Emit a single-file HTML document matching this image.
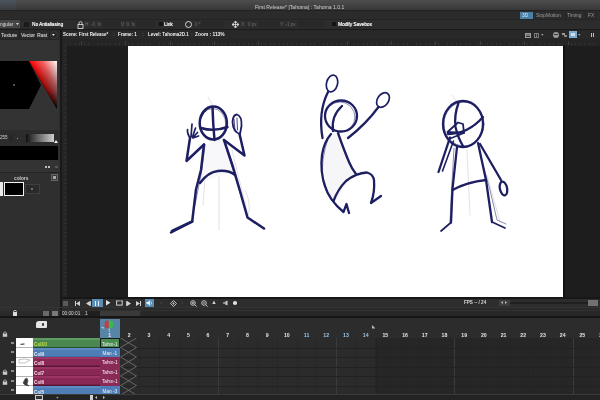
<!DOCTYPE html>
<html><head><meta charset="utf-8">
<style>
*{margin:0;padding:0;box-sizing:border-box}
html,body{width:600px;height:400px;overflow:hidden;background:#2a2a2a;font-family:"Liberation Sans",sans-serif;color:#ddd}
.a{position:absolute}
.t{position:absolute;white-space:nowrap;line-height:6px;will-change:transform}
.fn{position:absolute;top:332px;width:19.7px;text-align:center;font-size:5.2px;line-height:6px;font-weight:bold}
.cell{position:absolute;left:99.7px;width:19.7px;height:9.5px;font-size:4.7px;line-height:11px;text-align:center;color:#f4f4f4;will-change:transform}
</style></head><body>
<div class="a" style="left:0px;top:0px;width:600px;height:10px;background:linear-gradient(#4e4e4e,#373737);"></div>
<div class="a" style="left:0px;top:0px;width:16px;height:9.5px;background:linear-gradient(rgba(70,95,120,.35),rgba(70,95,120,.1));"></div>
<div class="t" style="left:255px;top:3.6px;color:#d0d0d0;font-size:5.1px;font-weight:normal;">First Release* [Tahoma] : Tahoma 1.0.1</div>
<div class="a" style="left:0px;top:10px;width:600px;height:1px;background:#222;"></div>
<div class="a" style="left:0px;top:11px;width:600px;height:8px;background:#2b2b2b;"></div>
<div class="a" style="left:519.5px;top:11.5px;width:13px;height:7.5px;background:#4a80a8;"></div>
<div class="t" style="left:522px;top:12.5px;color:#dce8f0;font-size:4.8px;font-weight:normal;">3D</div>
<div class="t" style="left:536px;top:12.5px;color:#9c9c9c;font-size:4.9px;font-weight:normal;">StopMotion</div>
<div class="t" style="left:567px;top:12.5px;color:#9c9c9c;font-size:4.9px;font-weight:normal;">Timing</div>
<div class="a" style="left:564.5px;top:11.5px;width:0.8px;height:7.5px;background:#232323;"></div>
<div class="a" style="left:585px;top:11.5px;width:0.8px;height:7.5px;background:#232323;"></div>
<div class="t" style="left:588px;top:12.5px;color:#9c9c9c;font-size:4.9px;font-weight:normal;">FX</div>
<div class="a" style="left:0px;top:19px;width:600px;height:10px;background:#2c2c2c;"></div>
<div class="a" style="left:0px;top:19px;width:600px;height:0.8px;background:#242424;"></div>
<div class="a" style="left:0px;top:20px;width:19.5px;height:8px;background:#454545;"></div>
<div class="t" style="left:0px;top:22px;color:#ddd;font-size:4.8px;font-weight:normal;">ngular</div>
<svg class="a" style="left:15.6px;top:23.3px" width="3" height="2.2" viewBox="0 0 3 2.2"><polygon points="0,0 3,0 1.5,2.2" fill="#d0d0d0"/></svg>
<div class="a" style="left:24px;top:22px;width:5px;height:5px;background:#1b1b1b;"></div>
<div class="t" style="left:32px;top:22px;color:#f4f4f4;font-size:4.7px;font-weight:normal;text-shadow:0.3px 0 0 #f4f4f4">No Antialiasing</div>
<svg class="a" style="left:77px;top:20.5px" width="7" height="8" viewBox="0 0 7 8"><path d="M2 3.5 V2.2 Q2 0.6 3.5 0.6 Q5 0.6 5 2.2 V3.5" stroke="#d8d8d8" stroke-width="0.9" fill="none"/><rect x="1" y="3.5" width="5" height="4" fill="none" stroke="#d8d8d8" stroke-width="0.9"/></svg>
<div class="t" style="left:85px;top:22px;color:#6f6f6f;font-size:4.6px;font-weight:normal;">H: -0 &nbsp;fx</div>
<div class="a" style="left:103px;top:21px;width:17px;height:6px;background:#282828;"></div>
<div class="t" style="left:121px;top:22px;color:#6f6f6f;font-size:4.6px;font-weight:normal;">V: 0 &nbsp;fx</div>
<div class="a" style="left:136px;top:21px;width:19px;height:6px;background:#282828;"></div>
<div class="a" style="left:159px;top:22px;width:4px;height:4px;background:#141414;"></div>
<div class="t" style="left:164px;top:22px;color:#f4f4f4;font-size:4.7px;font-weight:normal;text-shadow:0.3px 0 0 #f4f4f4">Link</div>
<div class="a" style="left:184.5px;top:20.5px;width:7px;height:7px;border:1.2px solid #d6d6d6;border-radius:50%"></div>
<div class="t" style="left:195px;top:22px;color:#6f6f6f;font-size:4.6px;font-weight:normal;">0 °</div>
<div class="a" style="left:201px;top:21px;width:24px;height:6px;background:#282828;"></div>
<svg class="a" style="left:231.5px;top:20.5px" width="7" height="7" viewBox="0 0 7 7"><path d="M3.5 0 L2.3 1.4 H4.7 Z M3.5 7 L2.3 5.6 H4.7 Z M0 3.5 L1.4 2.3 V4.7 Z M7 3.5 L5.6 2.3 V4.7 Z M3.5 1 V6 M1 3.5 H6" fill="#dcdcdc" stroke="#dcdcdc" stroke-width="0.8"/></svg>
<div class="t" style="left:241px;top:22px;color:#6f6f6f;font-size:4.6px;font-weight:normal;">X: &nbsp;0 px</div>
<div class="a" style="left:259px;top:21px;width:21px;height:6px;background:#282828;"></div>
<div class="t" style="left:280px;top:22px;color:#6f6f6f;font-size:4.6px;font-weight:normal;">Y: -1 px</div>
<div class="a" style="left:298px;top:21px;width:26px;height:6px;background:#282828;"></div>
<div class="a" style="left:332px;top:22px;width:4px;height:4px;background:#141414;"></div>
<div class="t" style="left:338px;top:22px;color:#f4f4f4;font-size:4.75px;font-weight:normal;text-shadow:0.3px 0 0 #f4f4f4">Modify Savebox</div>
<div class="a" style="left:0px;top:29px;width:600px;height:1px;background:#1a1a1a;"></div>
<div class="a" style="left:0px;top:30px;width:60px;height:280px;background:#2f2f2f;"></div>
<div class="a" style="left:0px;top:30px;width:60px;height:9px;background:#2a2a2a;"></div>
<div class="t" style="left:1px;top:32.8px;color:#b8b8b8;font-size:4.9px;font-weight:normal;text-shadow:0.3px 0 0 #b8b8b8">Texture</div>
<div class="a" style="left:18.5px;top:30.5px;width:0.8px;height:8px;background:#202020;"></div>
<div class="a" style="left:35px;top:30.5px;width:0.8px;height:8px;background:#202020;"></div>
<div class="a" style="left:48.5px;top:30.5px;width:0.8px;height:8px;background:#202020;"></div>
<div class="t" style="left:20.5px;top:32.8px;color:#b8b8b8;font-size:4.9px;font-weight:normal;text-shadow:0.3px 0 0 #b8b8b8">Vector</div>
<div class="t" style="left:37px;top:32.8px;color:#b8b8b8;font-size:4.9px;font-weight:normal;text-shadow:0.3px 0 0 #b8b8b8">Rast</div>
<div class="a" style="left:50px;top:31px;width:7.5px;height:7.5px;border-radius:50%;background:#262626;border:0.8px solid #3a3a3a"></div>
<svg class="a" style="left:52.3px;top:33.8px" width="2.8" height="2" viewBox="0 0 2.8 2"><polygon points="0,0 2.8,0 1.4,2" fill="#e6e6e6"/></svg>
<div class="a" style="left:0px;top:39px;width:59px;height:1px;background:#242424;"></div>
<div class="a" style="left:0px;top:40px;width:59px;height:90px;background:#333333;"></div>
<svg class="a" style="left:0;top:40px" width="60" height="90">
<defs>
<linearGradient id="gA" gradientUnits="userSpaceOnUse" x1="0" y1="21" x2="0" y2="69"><stop offset="0" stop-color="#ff0000"/><stop offset=".6" stop-color="#8a0000"/><stop offset="1" stop-color="#000"/></linearGradient>
<linearGradient id="gB" gradientUnits="userSpaceOnUse" x1="36.11" y1="33.19" x2="57" y2="21"><stop offset="0" stop-color="#000"/><stop offset=".45" stop-color="#5a5a5a"/><stop offset="1" stop-color="#fff"/></linearGradient>
</defs>
<polygon points="0,21 29,21 41,45 29,69 0,69" fill="#000"/>
<circle cx="14" cy="45" r="0.9" fill="#777"/>
<g style="isolation:isolate">
<polygon points="29,21 57,21 57,69" fill="url(#gA)"/>
<polygon points="29,21 57,21 57,69" fill="url(#gB)" style="mix-blend-mode:lighten"/>
</g>
</svg>
<div class="a" style="left:0px;top:130px;width:59px;height:16px;background:#2c2c2c;"></div>
<div class="t" style="left:0px;top:135.2px;color:#d0d0d0;font-size:4.6px;font-weight:normal;">255</div>
<div class="a" style="left:9px;top:134.5px;width:4px;height:7px;background:#262626;"></div>
<div class="a" style="left:16.5px;top:137.5px;width:1.3px;height:1.3px;background:#999;"></div>
<div class="a" style="left:26px;top:134px;width:28px;height:7.5px;background:linear-gradient(90deg,#0e0e0e,#3a3a3a 20%,#cfcfcf);"></div>
<div class="a" style="left:53.5px;top:139.5px;width:0;height:0;border-left:2.2px solid transparent;border-right:2.2px solid transparent;border-bottom:3.2px solid #eee"></div>
<div class="a" style="left:0px;top:146px;width:58px;height:13.5px;background:#000;"></div>
<div class="a" style="left:0px;top:159.5px;width:59px;height:12px;background:#333;"></div>
<div class="a" style="left:45px;top:166px;width:2.2px;height:1.6px;background:#bbb;"></div>
<div class="a" style="left:48px;top:166px;width:2.2px;height:1.6px;background:#bbb;"></div>
<div class="a" style="left:55px;top:165.5px;width:2.5px;height:2.5px;background:#555;"></div>
<div class="a" style="left:0px;top:171.5px;width:59px;height:1px;background:#242424;"></div>
<div class="a" style="left:0px;top:172.5px;width:59px;height:138px;background:#2f2f2f;"></div>
<div class="t" style="left:13.5px;top:175.6px;color:#cfcfcf;font-size:4.8px;font-weight:bold;">colors</div>
<div class="a" style="left:50.5px;top:174px;width:7px;height:7px;border:1px solid #666;background:#3a3a3a"></div>
<div class="a" style="left:52.5px;top:176px;width:3px;height:2.5px;background:#aaa;"></div>
<div class="a" style="left:0px;top:182px;width:3px;height:14px;background:#eaeaea;"></div>
<div class="a" style="left:4px;top:182px;width:19.5px;height:14px;border:1.6px solid #f2f2f2;background:#000"></div>
<div class="a" style="left:24.5px;top:184px;width:15.5px;height:10px;border:1px solid #3e3e3e;background:#2a2a2a"></div>
<div class="a" style="left:31.3px;top:188px;width:2px;height:2px;background:#6a6a6a;"></div>
<div class="a" style="left:59.5px;top:30px;width:2.5px;height:286px;background:#191919;"></div>
<div class="a" style="left:62px;top:30px;width:538px;height:268px;background:#1d1d1d;"></div>
<div class="a" style="left:62px;top:30px;width:538px;height:9px;background:#282828;"></div>
<div class="t" style="left:63px;top:32.3px;color:#f0f0f0;font-size:4.45px;font-weight:bold;">Scene: First Release*</div>
<div class="t" style="left:112.5px;top:32.3px;color:#777;font-size:4.5px;font-weight:normal;">::</div>
<div class="t" style="left:118px;top:32.3px;color:#f0f0f0;font-size:4.5px;font-weight:bold;">Frame: 1</div>
<div class="t" style="left:141.5px;top:32.3px;color:#777;font-size:4.5px;font-weight:normal;">::</div>
<div class="t" style="left:147.5px;top:32.3px;color:#f0f0f0;font-size:4.5px;font-weight:bold;">Level: Tahoma2D.1</div>
<div class="t" style="left:190.5px;top:32.3px;color:#777;font-size:4.5px;font-weight:normal;">::</div>
<div class="t" style="left:195px;top:32.3px;color:#f0f0f0;font-size:4.85px;font-weight:bold;">Zoom : 113%</div>
<div class="a" style="left:524.5px;top:32.5px;width:6.5px;height:5px;border:1px solid #9a9a9a;background:#3a3a3a"></div>
<div class="a" style="left:526px;top:34px;width:3.5px;height:2px;background:#777;"></div>
<div class="a" style="left:534px;top:32.5px;width:5px;height:5px;border:1px solid #7a7a7a"></div>
<div class="a" style="left:536px;top:33.5px;width:1px;height:3px;background:#777;"></div>
<svg class="a" style="left:541.3px;top:34.2px" width="2.6" height="1.8" viewBox="0 0 2.6 1.8"><polygon points="0,0 2.6,0 1.3,1.8" fill="#9a9a9a"/></svg>
<div class="a" style="left:553px;top:31.8px;width:6px;height:6px;border-radius:50%;background:#9a9a9a"></div>
<div class="a" style="left:554.3px;top:34.2px;width:3.4px;height:1.3px;background:#3a3a3a;"></div>
<div class="a" style="left:562px;top:33px;width:3px;height:2px;background:#999;"></div>
<div class="a" style="left:564px;top:35px;width:3px;height:2px;background:#888;"></div>
<div class="a" style="left:569px;top:31.2px;width:8px;height:7px;background:#7fa9cc;"></div>
<div class="a" style="left:571px;top:33px;width:4px;height:3px;background:#c8e0f4;"></div>
<svg class="a" style="left:578.3px;top:34.2px" width="2.6" height="1.8" viewBox="0 0 2.6 1.8"><polygon points="0,0 2.6,0 1.3,1.8" fill="#9a9a9a"/></svg>
<div class="a" style="left:590.5px;top:32.5px;width:1.3px;height:4.5px;background:#bdbdbd;"></div>
<div class="a" style="left:593.2px;top:32.5px;width:1.3px;height:4.5px;background:#bdbdbd;"></div>
<div class="a" style="left:62px;top:39px;width:538px;height:6.5px;background:#252525;"></div>
<div class="a" style="left:66px;top:42.5px;width:534px;height:2px;background-image:repeating-linear-gradient(90deg,#333 0 0.9px,transparent 0.9px 4.43px)"></div>
<div class="a" style="left:81.2px;top:40.5px;width:519px;height:4px;background-image:repeating-linear-gradient(90deg,#3e3e3e 0 0.9px,transparent 0.9px 44.3px)"></div>
<div class="a" style="left:62px;top:45px;width:4.5px;height:253px;background:#252525;"></div>
<div class="a" style="left:63.5px;top:46px;width:2px;height:252px;background-image:repeating-linear-gradient(180deg,#313131 0 0.9px,transparent 0.9px 4.43px)"></div>
<div class="a" style="left:127.5px;top:45.5px;width:435.5px;height:252px;background:#ffffff;"></div>
<div class="a" style="left:563px;top:45px;width:1.5px;height:253px;background:#121212;"></div>
<svg class="a" style="left:0;top:0" width="600" height="400" fill="none" stroke="#1d1f62" stroke-linecap="round" stroke-linejoin="round">
<g stroke="#cfcfd8" stroke-width="0.6">
<path d="M208 97 L213 106"/><path d="M219 140 L219 230"/><path d="M207 150 L203 205"/><path d="M232 150 L248 215"/>
<path d="M207 176 Q222 168 234 172"/><path d="M245 190 Q252 205 248 215"/>
<path d="M332 142 Q334 170 333 200" stroke="#c0c0cc"/><path d="M326 175 Q324 195 340 208"/>
<path d="M452 95 L458 103"/><path d="M467 150 L470 215"/><path d="M487 175 L500 222"/>
</g>
<polygon points="205,144 224,140 234,172 200,182" fill="#f8f8fa" stroke="none"/>
<path d="M331 134 Q324 142 322 155 Q320 172 325 186 Q329 200 335 203 Q345 181 356 174 Q352 169 349 162 Q344 150 338 133 Z" fill="#f6f6f8" stroke="none"/>
<g stroke-width="1" stroke="#5a5c90" opacity=".7">
<ellipse cx="212.8" cy="124" rx="13" ry="15.5"/>
<path d="M205 145 L201.5 172 L195 205"/><path d="M224 141 L236 180 L246 212"/>
<ellipse cx="340" cy="117" rx="15" ry="15"/>
<path d="M329 136 Q320 160 323 182 Q328 200 341 210"/>
<ellipse cx="464" cy="124" rx="20" ry="22"/>
<path d="M454 148 L451 200 L450 222"/><path d="M483 165 L490 190 L497 220 L506 224"/>
</g>
<g stroke-width="2.5">
<!-- fig1 -->
<ellipse cx="213.3" cy="123" rx="13.6" ry="16.5"/>
<path d="M201 118 Q206 106 216 106.5" stroke-width="1"/>
<path d="M212.5 107 Q213 124 214.5 140"/><path d="M201 128 Q214 132 227.5 127"/>
<path d="M204 144.5 L186.5 161 L190 138"/>
<path d="M190 138 Q187 133 187.5 129.5 M191 137 L192 124 M192.5 137 L195.5 128 M193 137.5 L197.5 132.5 M193 138 L198.5 136" stroke-width="1.7"/>
<path d="M224 140 L244.5 155.5 L239.5 134"/>
<path d="M240 134 Q233 132 232.5 122 Q233 114.5 237 114.5 Q242 116 241.5 126 L240 134" stroke-width="1.8"/>
<path d="M234 119 L235 130 M237 118 L237.5 130" stroke-width="0.8"/>
<path d="M204 144.5 L201 170 L196 189.5 L192.2 221.5 L171 232.5"/>
<path d="M192.2 221.5 L172 231" stroke-width="2.6"/>
<path d="M224 140 L233 167 L240 191 L247.5 217.5 L264 228.5"/>
<path d="M200 183 Q208 172 218 171 Q229 170 235 175"/>
</g>
<g stroke-width="2.3">
<!-- fig2 -->
<ellipse cx="332" cy="83.5" rx="5.5" ry="8.5" transform="rotate(15 332 83.5)" stroke-width="1.7"/>
<ellipse cx="383" cy="100" rx="5.5" ry="8" transform="rotate(35 383 100)" stroke-width="1.7"/>
<path d="M328 92 Q318 112 322.5 138"/>
<path d="M378.5 107 Q366 124 348 138"/>
<ellipse cx="341" cy="116" rx="16" ry="15.5"/>
<path d="M342 106 Q331 116 333 131"/>
<path d="M331 134 Q324 142 322 155 Q320 172 325 186 Q329 200 343.5 212 L346.5 204 L349 213"/>
<path d="M338 133 Q344 150 349 162 Q352 169 356 174"/>
<path d="M333.5 201 Q338 189 346 181 Q356 173 367 172.5 Q373 174 374 180 Q375 192 371 203 L381 196"/>
<!-- fig3 -->
<ellipse cx="463" cy="124" rx="20" ry="23"/>
<path d="M458.5 103 Q454 115 455.5 127 Q458 138 463 146"/><path d="M448 134 Q468 134 483 117"/>
<path d="M447.5 132 L458 122.5 L463 124 L464 133 Z" stroke-width="1.8"/><path d="M449 139 L464 133" stroke-width="1.4"/>
<path d="M450 137.5 L438.5 172"/><path d="M453.5 141 L442.5 171" stroke-width="1.6"/>
<path d="M457 147 L452.5 189 L451 222.5"/><path d="M451 222.5 L441 231" stroke-width="1.7"/>
<path d="M452.5 190 Q467 182 486 180"/>
<path d="M478 143 L486 180 L492 222"/><path d="M492 222 L505 228" stroke-width="1.7"/>
<path d="M480 144 L501 180"/>
<ellipse cx="503.5" cy="188.5" rx="3.6" ry="7" transform="rotate(-12 503.5 188.5)"/>
</g>
</svg>
<div class="a" style="left:62px;top:297px;width:538px;height:1.5px;background:#171717;"></div>
<div class="a" style="left:62px;top:298.5px;width:538px;height:8px;background:#2d2d2d;"></div>
<div class="a" style="left:62.5px;top:300.5px;width:5.5px;height:5px;background:#5a5a5a;"></div>
<div class="a" style="left:74.5px;top:300.5px;width:1.2px;height:5px;background:#d4d4d4;"></div>
<svg class="a" style="left:76px;top:300.5px" width="4" height="5" viewBox="0 0 4 5"><polygon points="4,0 4,5 0,2.5" fill="#d4d4d4"/></svg>
<svg class="a" style="left:85.5px;top:300.5px" width="4.2" height="5" viewBox="0 0 4.2 5"><polygon points="4.2,0 4.2,5 0,2.5" fill="#d4d4d4"/></svg>
<div class="a" style="left:89.8px;top:300.5px;width:1px;height:5px;background:#bbb;"></div>
<div class="a" style="left:91.5px;top:298.5px;width:11px;height:9px;background:#5a8db3;"></div>
<div class="a" style="left:95px;top:300.5px;width:1.3px;height:5px;background:#eef;"></div>
<div class="a" style="left:97.8px;top:300.5px;width:1.3px;height:5px;background:#eef;"></div>
<svg class="a" style="left:106px;top:300.3px" width="4.5" height="5.4" viewBox="0 0 4.5 5.4"><polygon points="0,0 0,5.4 4.5,2.7" fill="#e4e4e4"/></svg>
<svg class="a" style="left:115.5px;top:300px" width="7" height="6" viewBox="0 0 7 6"><rect x="0.6" y="0.9" width="5.6" height="4.2" fill="none" stroke="#d0d0d0" stroke-width="1"/><rect x="2.4" y="0" width="2" height="2" fill="#2d2d2d"/><polygon points="2.6,0 4.2,0.9 2.6,1.8" fill="#d0d0d0"/></svg>
<div class="a" style="left:125.5px;top:300.5px;width:1px;height:5px;background:#bbb;"></div>
<svg class="a" style="left:126.8px;top:300.5px" width="4.2" height="5" viewBox="0 0 4.2 5"><polygon points="0,0 0,5 4.2,2.5" fill="#d4d4d4"/></svg>
<svg class="a" style="left:135.5px;top:300.5px" width="4" height="5" viewBox="0 0 4 5"><polygon points="0,0 0,5 4,2.5" fill="#d4d4d4"/></svg>
<div class="a" style="left:139.8px;top:300.5px;width:1.2px;height:5px;background:#d4d4d4;"></div>
<div class="a" style="left:145px;top:298.5px;width:8.5px;height:9px;background:#5a8db3;"></div>
<svg class="a" style="left:146px;top:300px" width="7" height="6" viewBox="0 0 7 6"><path d="M0.5 2 H2 L4 0.3 V5.7 L2 4 H0.5 Z" fill="#eef"/><path d="M5 1.5 Q6.3 3 5 4.5" stroke="#eef" stroke-width="0.7" fill="none"/></svg>
<div class="t" style="left:160px;top:299px;color:#555;font-size:6px;font-weight:normal;">‹</div>
<svg class="a" style="left:169.5px;top:299.5px" width="7" height="7" viewBox="0 0 7 7"><path d="M3.5 0.5 L6.5 3.5 L3.5 6.5 L0.5 3.5 Z" fill="none" stroke="#cfcfcf" stroke-width="0.9"/><circle cx="3.5" cy="3.5" r="1" fill="#cfcfcf"/></svg>
<div class="t" style="left:181px;top:299px;color:#555;font-size:6px;font-weight:normal;">›</div>
<svg class="a" style="left:190px;top:299.5px" width="7" height="7" viewBox="0 0 7 7"><circle cx="3" cy="3" r="2.3" fill="none" stroke="#cfcfcf" stroke-width="0.9"/><path d="M4.6 4.6 L6.6 6.6 M3 1.8 V4.2 M1.8 3 H4.2" stroke="#cfcfcf" stroke-width="0.9"/></svg>
<svg class="a" style="left:200.5px;top:299.5px" width="7" height="7" viewBox="0 0 7 7"><circle cx="3" cy="3" r="2.3" fill="none" stroke="#cfcfcf" stroke-width="0.9"/><path d="M4.6 4.6 L6.6 6.6 M1.8 3 H4.2" stroke="#cfcfcf" stroke-width="0.9"/></svg>
<div class="t" style="left:211px;top:299px;color:#cfcfcf;font-size:6px;font-weight:normal;">▲</div>
<svg class="a" style="left:222px;top:300px" width="6" height="6" viewBox="0 0 6 6"><path d="M0.5 3 L5.5 0.5 V5.5 Z" fill="#cfcfcf"/><path d="M3 1.8 V4.2" stroke="#2d2d2d" stroke-width="0.6"/></svg>
<div class="a" style="left:233px;top:301px;width:3.5px;height:3.5px;background:#ddd;border-radius:50%"></div>
<div class="t" style="left:464px;top:300px;color:#d8d8d8;font-size:4.6px;font-weight:bold;">FPS -- / 24</div>
<div class="a" style="left:498.5px;top:300px;width:11.5px;height:5.5px;background:#3e3e3e;"></div>
<svg class="a" style="left:501px;top:301.3px" width="2" height="3" viewBox="0 0 2 3"><polygon points="2,0 2,3 0,1.5" fill="#bbb"/></svg>
<svg class="a" style="left:505px;top:301.3px" width="2" height="3" viewBox="0 0 2 3"><polygon points="0,0 0,3 2,1.5" fill="#bbb"/></svg>
<div class="a" style="left:510px;top:302px;width:78px;height:1.5px;background:#202020;"></div>
<div class="a" style="left:588px;top:300px;width:9.5px;height:6px;background:#727272;"></div>
<div class="a" style="left:0px;top:306.5px;width:600px;height:1px;background:#343434;"></div>
<div class="a" style="left:62px;top:307.5px;width:538px;height:2.5px;background:#2a2a2a;"></div>
<div class="a" style="left:0px;top:310px;width:600px;height:1px;background:#303030;"></div>
<div class="a" style="left:62px;top:311px;width:538px;height:5px;background:#282828;"></div>
<div class="a" style="left:0px;top:316px;width:600px;height:1.8px;background:#161616;"></div>
<svg class="a" style="left:12px;top:309.5px" width="6" height="7" viewBox="0 0 6 7"><path d="M1.5 3.2 V2 Q1.5 0.4 3 0.4 Q4.5 0.4 4.6 1.6" stroke="#ddd" stroke-width="0.8" fill="none"/></svg>
<div class="a" style="left:12.5px;top:312px;width:4.5px;height:3.5px;background:#ddd;"></div>
<div class="a" style="left:43px;top:311px;width:5.5px;height:4.5px;background:#6a6a6a;"></div>
<div class="a" style="left:52px;top:311px;width:6px;height:4.5px;background:#7a7a7a;"></div>
<div class="t" style="left:62px;top:310.5px;color:#d8d8d8;font-size:4.7px;font-weight:normal;">00:00:01</div>
<div class="t" style="left:84.5px;top:310.5px;color:#d8d8d8;font-size:4.7px;font-weight:normal;">1</div>
<div class="a" style="left:87.5px;top:310.5px;width:12.5px;height:5.5px;background:#221e1e;"></div>
<div class="a" style="left:100px;top:310.5px;width:40px;height:5.5px;background:#3a3a3a;"></div>
<div class="a" style="left:0px;top:317.8px;width:600px;height:20.2px;background:#2c2c2c;"></div>
<div class="a" style="left:36px;top:321px;width:11px;height:6.5px;background:#e6e6e6;border-radius:3px 1px 1px 1px"></div>
<div class="a" style="left:41.5px;top:323px;width:2.5px;height:2.5px;background:#333;border-radius:50%"></div>
<svg class="a" style="left:1.5px;top:330.5px" width="6" height="6"><path d="M1.5 2.8 V1.8 Q3 -0.2 4.5 1.8 V2.8" stroke="#c8c8c8" stroke-width="0.8" fill="none"/><rect x="0.8" y="2.6" width="4.4" height="3.2" fill="#c8c8c8"/></svg>
<div class="a" style="left:99.7px;top:318.5px;width:19.9px;height:19.5px;background:#5785a6;"></div>
<svg class="a" style="left:99.7px;top:318.5px" width="20" height="19">
<ellipse cx="6.8" cy="5.5" rx="2.2" ry="4" fill="#c43c44"/><ellipse cx="11" cy="5.5" rx="2.3" ry="4" fill="#3bb84e"/>
<path d="M9 9.5 L9.5 13" stroke="#e0e0e0" stroke-width="0.7"/><path d="M1.5 8.5 L4 9" stroke="#e8e8e8" stroke-width="0.8"/>
</svg>
<div class="fn" style="left:99.7px;color:#dceaf6">1</div>
<div class="fn" style="left:119.4px;color:#dde6ee">2</div>
<div class="fn" style="left:139.1px;color:#dde6ee">3</div>
<div class="fn" style="left:158.8px;color:#dde6ee">4</div>
<div class="fn" style="left:178.5px;color:#dde6ee">5</div>
<div class="fn" style="left:198.2px;color:#dde6ee">6</div>
<div class="fn" style="left:217.9px;color:#dde6ee">7</div>
<div class="fn" style="left:237.6px;color:#dde6ee">8</div>
<div class="fn" style="left:257.3px;color:#dde6ee">9</div>
<div class="fn" style="left:277.0px;color:#dde6ee">10</div>
<div class="fn" style="left:296.7px;color:#9cc6e4">11</div>
<div class="fn" style="left:316.4px;color:#9cc6e4">12</div>
<div class="fn" style="left:336.1px;color:#9cc6e4">13</div>
<div class="fn" style="left:355.8px;color:#9cc6e4">14</div>
<div class="fn" style="left:375.5px;color:#e4e4e4">15</div>
<div class="fn" style="left:395.2px;color:#e4e4e4">16</div>
<div class="fn" style="left:414.9px;color:#e4e4e4">17</div>
<div class="fn" style="left:434.6px;color:#e4e4e4">18</div>
<div class="fn" style="left:454.3px;color:#e4e4e4">19</div>
<div class="fn" style="left:474.0px;color:#e4e4e4">20</div>
<div class="fn" style="left:493.7px;color:#e4e4e4">21</div>
<div class="fn" style="left:513.4px;color:#e4e4e4">22</div>
<div class="fn" style="left:533.1px;color:#e4e4e4">23</div>
<div class="fn" style="left:552.8px;color:#e4e4e4">24</div>
<div class="fn" style="left:572.5px;color:#e4e4e4">25</div>
<div class="fn" style="left:592.2px;color:#e4e4e4">26</div>
<div class="fn" style="left:611.9px;color:#e4e4e4">27</div>
<svg class="a" style="left:371.8px;top:325px" width="3.5" height="3.5" viewBox="0 0 3.5 3.5"><polygon points="0,0 0,3.5 3.5,3.5" fill="#bbb"/></svg>
<div class="a" style="left:0px;top:338px;width:600px;height:56px;background:#2b2b2b;"></div>
<div class="a" style="left:374.5px;top:338px;width:226px;height:56px;background:#262626;"></div>
<div class="a" style="left:119.4px;top:338px;width:0.8px;height:56px;background:#272727;"></div>
<div class="a" style="left:139.1px;top:338px;width:0.8px;height:56px;background:#272727;"></div>
<div class="a" style="left:158.8px;top:338px;width:0.8px;height:56px;background:#272727;"></div>
<div class="a" style="left:178.5px;top:338px;width:0.8px;height:56px;background:#272727;"></div>
<div class="a" style="left:198.2px;top:338px;width:0.8px;height:56px;background:#272727;"></div>
<div class="a" style="left:217.9px;top:338px;width:0.8px;height:56px;background:#3b3b3b;"></div>
<div class="a" style="left:237.6px;top:338px;width:0.8px;height:56px;background:#272727;"></div>
<div class="a" style="left:257.3px;top:338px;width:0.8px;height:56px;background:#272727;"></div>
<div class="a" style="left:277.0px;top:338px;width:0.8px;height:56px;background:#272727;"></div>
<div class="a" style="left:296.7px;top:338px;width:0.8px;height:56px;background:#272727;"></div>
<div class="a" style="left:316.4px;top:338px;width:0.8px;height:56px;background:#272727;"></div>
<div class="a" style="left:336.1px;top:338px;width:0.8px;height:56px;background:#3b3b3b;"></div>
<div class="a" style="left:355.8px;top:338px;width:0.8px;height:56px;background:#272727;"></div>
<div class="a" style="left:375.5px;top:338px;width:0.8px;height:56px;background:#232323;"></div>
<div class="a" style="left:395.2px;top:338px;width:0.8px;height:56px;background:#272727;"></div>
<div class="a" style="left:414.9px;top:338px;width:0.8px;height:56px;background:#272727;"></div>
<div class="a" style="left:434.6px;top:338px;width:0.8px;height:56px;background:#272727;"></div>
<div class="a" style="left:454.3px;top:338px;width:0.8px;height:56px;background:#3b3b3b;"></div>
<div class="a" style="left:474.0px;top:338px;width:0.8px;height:56px;background:#272727;"></div>
<div class="a" style="left:493.7px;top:338px;width:0.8px;height:56px;background:#272727;"></div>
<div class="a" style="left:513.4px;top:338px;width:0.8px;height:56px;background:#272727;"></div>
<div class="a" style="left:533.1px;top:338px;width:0.8px;height:56px;background:#232323;"></div>
<div class="a" style="left:552.8px;top:338px;width:0.8px;height:56px;background:#272727;"></div>
<div class="a" style="left:572.5px;top:338px;width:0.8px;height:56px;background:#3b3b3b;"></div>
<div class="a" style="left:592.2px;top:338px;width:0.8px;height:56px;background:#272727;"></div>
<div class="a" style="left:611.9px;top:338px;width:0.8px;height:56px;background:#272727;"></div>
<div class="a" style="left:631.6px;top:338px;width:0.8px;height:56px;background:#272727;"></div>
<div class="a" style="left:119px;top:347.5px;width:481px;height:0.8px;background:#222222;"></div>
<div class="a" style="left:119px;top:357.0px;width:481px;height:0.8px;background:#222222;"></div>
<div class="a" style="left:119px;top:366.5px;width:481px;height:0.8px;background:#222222;"></div>
<div class="a" style="left:119px;top:376.0px;width:481px;height:0.8px;background:#222222;"></div>
<div class="a" style="left:119px;top:385.5px;width:481px;height:0.8px;background:#222222;"></div>
<div class="a" style="left:15.5px;top:338px;width:17px;height:57px;background:#ffffff;"></div>
<div class="a" style="left:32.5px;top:338.0px;width:67.2px;height:9.5px;background:linear-gradient(#5c9c62 0 20%,#4a8751 20% 85%,#3d7444 85%);"></div>
<div class="t" style="left:34px;top:342.2px;color:#c8e640;font-size:4.7px;font-weight:bold;">Col10</div>
<div class="cell" style="top:338.0px;background:#4c8b52;border:1px solid #1a1a1a;">Tahm-1</div>
<div class="a" style="left:15px;top:347.2px;width:85px;height:0.6px;background:rgba(0,0,0,.3);"></div>
<div class="a" style="left:10.5px;top:341.5px;width:3px;height:2.2px;background:#8a8a8a;"></div>
<div class="a" style="left:32.5px;top:347.5px;width:67.2px;height:9.5px;background:linear-gradient(#5d8cc4 0 20%,#4f7db6 20% 85%,#446ea3 85%);"></div>
<div class="t" style="left:34px;top:351.7px;color:#e6eef8;font-size:4.7px;font-weight:bold;">Col9</div>
<div class="cell" style="top:347.5px;background:#4f7fb6;">Man -1</div>
<div class="a" style="left:15px;top:356.7px;width:85px;height:0.6px;background:rgba(0,0,0,.3);"></div>
<div class="a" style="left:10.5px;top:351.0px;width:3px;height:2.2px;background:#8a8a8a;"></div>
<div class="a" style="left:32.5px;top:357.0px;width:67.2px;height:9.5px;background:linear-gradient(#9c3563 0 20%,#8a2855 20% 85%,#78204a 85%);"></div>
<div class="t" style="left:34px;top:361.2px;color:#f6dbe6;font-size:4.7px;font-weight:bold;">Col8</div>
<div class="cell" style="top:357.0px;background:#8a2a57;">Tahm-1</div>
<div class="a" style="left:15px;top:366.2px;width:85px;height:0.6px;background:rgba(0,0,0,.3);"></div>
<div class="a" style="left:10.5px;top:360.5px;width:3px;height:2.2px;background:#8a8a8a;"></div>
<div class="a" style="left:32.5px;top:366.5px;width:67.2px;height:9.5px;background:linear-gradient(#9c3563 0 20%,#8a2855 20% 85%,#78204a 85%);"></div>
<div class="t" style="left:34px;top:370.7px;color:#f6dbe6;font-size:4.7px;font-weight:bold;">Col7</div>
<div class="cell" style="top:366.5px;background:#8a2a57;">Tahm-1</div>
<div class="a" style="left:15px;top:375.7px;width:85px;height:0.6px;background:rgba(0,0,0,.3);"></div>
<div class="a" style="left:10.5px;top:370.0px;width:3px;height:2.2px;background:#8a8a8a;"></div>
<div class="a" style="left:32.5px;top:376.0px;width:67.2px;height:9.5px;background:linear-gradient(#9c3563 0 20%,#8a2855 20% 85%,#78204a 85%);"></div>
<div class="t" style="left:34px;top:380.2px;color:#f6dbe6;font-size:4.7px;font-weight:bold;">Col6</div>
<div class="cell" style="top:376.0px;background:#8a2a57;">Tahm-1</div>
<div class="a" style="left:15px;top:385.2px;width:85px;height:0.6px;background:rgba(0,0,0,.3);"></div>
<div class="a" style="left:10.5px;top:379.5px;width:3px;height:2.2px;background:#8a8a8a;"></div>
<div class="a" style="left:32.5px;top:385.5px;width:67.2px;height:9.5px;background:linear-gradient(#5d8cc4 0 20%,#4f7db6 20% 85%,#446ea3 85%);"></div>
<div class="t" style="left:34px;top:389.7px;color:#e6eef8;font-size:4.7px;font-weight:bold;">Col5</div>
<div class="cell" style="top:385.5px;background:#4f7fb6;">Man -3</div>
<div class="a" style="left:15px;top:394.7px;width:85px;height:0.6px;background:rgba(0,0,0,.3);"></div>
<div class="a" style="left:10.5px;top:389.0px;width:3px;height:2.2px;background:#8a8a8a;"></div>
<svg class="a" style="left:15.5px;top:338px" width="17" height="57" fill="none" stroke="#333" stroke-width="0.6">
<path d="M4.5 6.3 L8.5 6" stroke="#222" stroke-width="1"/>
<path d="M3 21.5 L9 21 L14 22 L9 25 L3 25 Z" stroke="#888" stroke-width="0.5"/>
<path d="M7 45 L9 41 L11 40 L12 43 L11 46 L13 48 L9 47 Z" fill="#3a3a3a" stroke="#444"/>
</svg>
<svg class="a" style="left:1.5px;top:369px" width="6" height="6"><path d="M1.5 2.8 V1.8 Q3 -0.2 4.5 1.8 V2.8" stroke="#c8c8c8" stroke-width="0.8" fill="none"/><rect x="0.8" y="2.6" width="4.4" height="3.2" fill="#c8c8c8"/></svg>
<svg class="a" style="left:1.5px;top:378.5px" width="6" height="6"><path d="M1.5 2.8 V1.8 Q3 -0.2 4.5 1.8 V2.8" stroke="#c8c8c8" stroke-width="0.8" fill="none"/><rect x="0.8" y="2.6" width="4.4" height="3.2" fill="#c8c8c8"/></svg>
<svg class="a" style="left:119.4px;top:338px" width="20" height="57" stroke="#7a7a7a" stroke-width="0.75" fill="none">
<path d="M1.5 0 L17.5 9.5 L1.5 19 L17.5 28.5 L1.5 38 L17.5 47.5 L1.5 57"/>
<path d="M17.5 0 L1.5 9.5 L17.5 19 L1.5 28.5 L17.5 38 L1.5 47.5 L17.5 57"/>
</svg>
<div class="a" style="left:0px;top:393.5px;width:600px;height:1.5px;background:#3a3a3a;"></div>
<div class="a" style="left:0px;top:395px;width:600px;height:5px;background:#232323;"></div>
<div class="a" style="left:34.5px;top:395px;width:8px;height:4.5px;border:1px solid #cfcfcf;background:#333"></div>
<div class="t" style="left:56px;top:394.5px;color:#bbb;font-size:4.5px;font-weight:normal;">+</div>
<div class="a" style="left:89.5px;top:394.5px;width:3px;height:5.5px;background:#cfcfcf;"></div>
<svg class="a" style="left:94.5px;top:395.8px" width="2" height="3" viewBox="0 0 2 3"><polygon points="2,0 2,3 0,1.5" fill="#ccc"/></svg>
<svg class="a" style="left:102.5px;top:395.8px" width="2" height="3" viewBox="0 0 2 3"><polygon points="0,0 0,3 2,1.5" fill="#ccc"/></svg>
</body></html>
